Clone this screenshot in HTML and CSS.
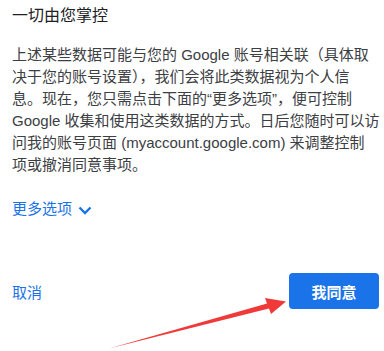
FILE: index.html
```html
<!DOCTYPE html>
<html lang="zh-CN">
<head>
  <meta charset="UTF-8">
  <meta name="viewport" content="width=device-width, initial-scale=1.0">
  <title>一切由您掌控</title>
  <link rel="stylesheet" href="styles.css">
</head>
<body>
  <div class="dialog">
    <h2 class="dialog-title">一切由您掌控</h2>
    <p class="dialog-text">
      上述某些数据可能与您的 Google 账号相关联（具体取<br>
      决于您的账号设置），我们会将此类数据视为个人信<br>
      息。现在，您只需点击下面的“更多选项”，便可控制<br>
      Google 收集和使用这类数据的方式。日后您随时可以访<br>
      问我的账号页面 (myaccount.google.com) 来调整控制<br>
      项或撤消同意事项。
    </p>

    <a class="more-link" href="#">
      更多选项
      <svg class="chevron" width="14" height="9" viewBox="0 0 14 9">
        <polyline points="1.5,1.5 7,7 12.5,1.5" fill="none" stroke="#1a73e8" stroke-width="2.4"/>
      </svg>
    </a>

    <div class="dialog-actions">
      <a class="cancel-link" href="#">取消</a>
      <button class="agree-btn" type="button">我同意</button>
    </div>
  </div>

  <!-- 标注箭头 -->
  <svg class="arrow" width="384" height="351" viewBox="0 0 384 351">
    <polygon points="109,348.5 267,303.5 265,298 286,301.5 271,314 269,308.5" fill="#f03a3a"/>
  </svg>
</body>
</html>
```

FILE: styles.css
```css
body {
  margin: 0;
  background-color: white;
  font-family: "Liberation Sans", "Noto Sans CJK SC", sans-serif;
  color: #3c4043;
}

.dialog {
  padding: 4px 5px 0 12px;
}

.dialog-title {
  margin: 0;
  font-size: 16px;
  font-weight: normal;
  line-height: 24px;
  color: #202124;
}

.dialog-text {
  margin: 16px 0 0;
  font-size: 15px;
  line-height: 22px;
  white-space: nowrap;
}

.more-link {
  display: inline-flex;
  align-items: center;
  gap: 6px;
  margin-top: 22px;
  font-size: 15px;
  line-height: 22px;
  color: #1a73e8;
  text-decoration: none;
}

.chevron {
  margin-top: 3px;
}

.dialog-actions {
  display: flex;
  justify-content: space-between;
  align-items: center;
  margin-top: 53px;
}

.cancel-link {
  font-size: 15px;
  color: #1a73e8;
  text-decoration: none;
}

.agree-btn {
  width: 90px;
  height: 36px;
  font-family: inherit;
  font-size: 15px;
  font-weight: bold;
  color: white;
  background-color: #1a73e8;
  border: none;
  border-radius: 4px;
  cursor: pointer;
}

.arrow {
  position: absolute;
  left: 0;
  top: 0;
  pointer-events: none;
}
```
